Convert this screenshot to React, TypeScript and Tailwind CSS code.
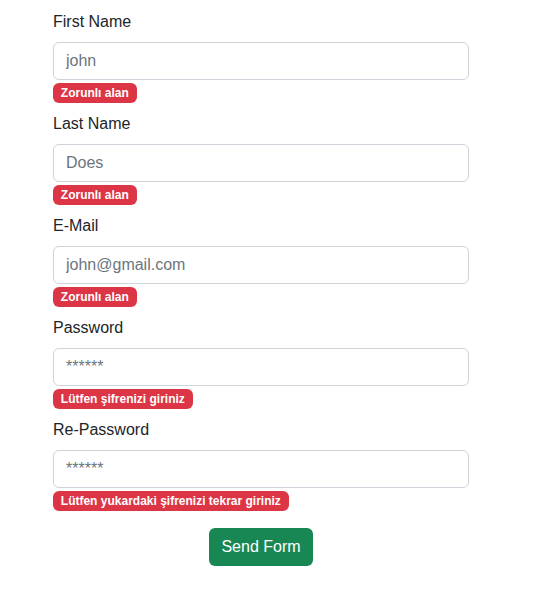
import React from "react";

const fields = [
  { label: "First Name", placeholder: "john", error: "Zorunlı alan", type: "text" },
  { label: "Last Name", placeholder: "Does", error: "Zorunlı alan", type: "text" },
  { label: "E-Mail", placeholder: "john@gmail.com", error: "Zorunlı alan", type: "text" },
  { label: "Password", placeholder: "******", error: "Lütfen şifrenizi giriniz", type: "password" },
  { label: "Re-Password", placeholder: "******", error: "Lütfen yukardaki şifrenizi tekrar giriniz", type: "password" },
];

export default function App() {
  return (
    <div
      className="min-h-[613px] w-[553px] bg-white text-[#212529]"
      style={{ fontFamily: '"Liberation Sans", Arial, sans-serif' }}
    >
      <form className="ml-[53px] w-[416px] pt-[10px]" onSubmit={(e) => e.preventDefault()}>
        {fields.map((f) => (
          <div key={f.label} className="mb-[9px]">
            <label className="mb-2 block text-base leading-6">{f.label}</label>
            <input
              type="text"
              placeholder={f.placeholder}
              className="block h-[38px] w-full rounded-[6px] border border-[#ced4da] bg-white px-3 text-base leading-6 text-[#212529] outline-none placeholder:text-[#6c757d]"
            />
            <div className="mt-[3px] flex">
              <span className="inline-block h-[20px] rounded-[6px] bg-[#dc3545] px-[7.8px] py-[4px] text-[12px] font-bold leading-[12px] text-white">
                {f.error}
              </span>
            </div>
          </div>
        ))}
        <div className="mt-[17px] flex justify-center">
          <button
            type="submit"
            className="h-[38px] rounded-[6px] bg-[#198754] px-3 py-[6px] text-base leading-6 text-white"
          >
            Send Form
          </button>
        </div>
      </form>
    </div>
  );
}
